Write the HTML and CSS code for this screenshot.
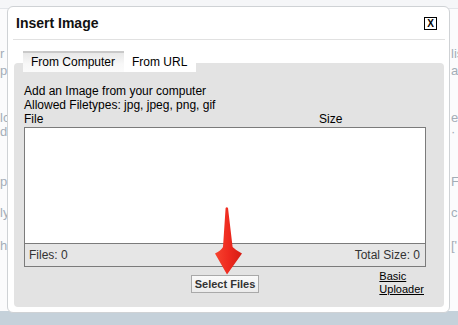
FILE: index.html
```html
<!DOCTYPE html>
<html lang="en">
<head>
    <meta charset="UTF-8">
    <title>Insert Image</title>
    <link rel="stylesheet" href="styles.css">
</head>
<body>
    <div class="page">
        <div class="page-text">
            <div class="bg-row"><span class="frag-l">r</span><span class="frag-r">lis</span></div>
            <div class="bg-row gap-a"><span class="frag-l">p</span><span class="frag-r">as</span></div>
            <div class="bg-row gap-b"><span class="frag-l">lc</span><span class="frag-r">e</span></div>
            <div class="bg-row"><span class="frag-l">d</span><span class="frag-r">·</span></div>
            <div class="bg-row gap-c"><span class="frag-l">p</span><span class="frag-r">Fi</span></div>
            <div class="bg-row gap-d"><span class="frag-l">ly</span><span class="frag-r">c</span></div>
            <div class="bg-row gap-e"><span class="frag-l">h</span><span class="frag-r">['</span></div>
        </div>
        <div class="page-bar"></div>
    </div>

    <div class="dialog">
        <div class="dialog-head">
            <span class="dialog-title">Insert Image</span>
            <span class="close">X</span>
        </div>
        <div class="panel">
            <div class="tabs">
                <span class="tab tab-active">From Computer</span>
                <span class="tab tab-plain">From URL</span>
            </div>
            <div class="panel-body">
                <p class="line">Add an Image from your computer</p>
                <p class="line">Allowed Filetypes: jpg, jpeg, png, gif</p>
                <div class="file-head">
                    <span>File</span>
                    <span>Size</span>
                </div>
                <div class="file-list">
                    <div class="file-rows"></div>
                    <div class="file-foot">
                        <span>Files: 0</span>
                        <span>Total Size: 0</span>
                    </div>
                </div>
                <div class="actions">
                    <span class="btn">Select Files</span>
                    <a class="uploader" href="#">Basic<br>Uploader</a>
                </div>
            </div>
        </div>
    </div>

    <svg class="arrow" viewBox="0 0 34 72">
        <defs>
            <linearGradient id="red" x1="0" y1="0" x2="1" y2="0">
                <stop offset="0" stop-color="#f7442f"/>
                <stop offset="0.5" stop-color="#ee2a1f"/>
                <stop offset="1" stop-color="#d41d14"/>
            </linearGradient>
        </defs>
        <path d="M13.6 3 Q14.8 1.4 16 3 L20.6 42 Q24 45.5 30 48.5 L15 69.5 L3 48.5 Q9 45.5 11 42 Z" fill="url(#red)"/>
    </svg>
</body>
</html>
```

FILE: styles.css
```css
body {
    margin: 0;
    width: 458px;
    height: 325px;
    overflow: hidden;
    position: relative;
    font-family: "Liberation Sans", Arial, sans-serif;
    background: #f5f6f8;
}

/* page behind the modal */
.page {
    display: flex;
    flex-direction: column;
    height: 325px;
}
.page-text {
    flex: 1;
    margin-top: 8px;
    padding-top: 38px;
    border-top: 1px solid #e2e5e9;
    background: #fbfbfc;
    font-size: 13px;
    color: #a3adb7;
}
.bg-row {
    display: flex;
    justify-content: space-between;
    height: 14px;
    line-height: 14px;
}
.gap-a { margin-top: 3px; }
.gap-b { margin-top: 33px; }
.gap-c { margin-top: 36px; }
.gap-d { margin-top: 17px; }
.gap-e { margin-top: 19px; }
.frag-l {
    width: 20px;
}
.frag-r {
    width: 7px;
    overflow: hidden;
    white-space: nowrap;
}
.page-bar {
    height: 14px;
    background: #c5d1da;
}

/* modal */
.dialog {
    position: absolute;
    left: 7px;
    top: 6px;
    width: 443px;
    box-sizing: border-box;
    background: #fff;
    border: 1px solid #cfd2d5;
    border-radius: 6px;
}
.dialog-head {
    display: flex;
    align-items: center;
    justify-content: space-between;
    height: 32px;
    margin: 0 4px 0 5px;
    padding: 0 8px 0 3px;
    border-bottom: 1px solid #e1e1e1;
}
.dialog-title {
    font-size: 14px;
    font-weight: bold;
    color: #111;
}
.close {
    width: 13px;
    height: 13px;
    box-sizing: border-box;
    border: 1px solid #000;
    font-size: 10px;
    font-weight: bold;
    line-height: 11px;
    text-align: center;
}
.panel {
    display: flow-root;
    margin: 23px 5px 5px 6px;
    background: #e3e3e3;
    border-radius: 4px;
}
.tabs {
    display: flex;
    align-items: flex-end;
    height: 21px;
    margin-top: -12px;
    padding-left: 9px;
    font-size: 12px;
}
.tab {
    padding: 0 9px 0 8px;
    color: #000;
}
.tab-active {
    height: 19px;
    line-height: 19px;
    border-top: 2px solid #c9c9c9;
    background: linear-gradient(#e8e8e8, #f8f8f8 60%, #fbfbfb);
}
.tab-plain {
    height: 15px;
    line-height: 15px;
    padding-bottom: 2px;
    background: #fff;
}
.panel-body {
    padding: 12px 18px 11px 10px;
    font-size: 12px;
    line-height: 14px;
    color: #000;
}
.line {
    margin: 0;
}
.file-head {
    display: grid;
    grid-template-columns: 295px 1fr;
    margin-bottom: 1px;
}
.file-list {
    border: 1px solid #7b7b7b;
    background: #fff;
}
.file-rows {
    height: 115px;
}
.file-foot {
    display: flex;
    align-items: center;
    justify-content: space-between;
    height: 22px;
    padding: 0 5px 0 4px;
    border-top: 1px solid #7b7b7b;
    background: #e6e6e6;
    color: #333;
}
.actions {
    display: grid;
    grid-template-columns: 1fr auto 1fr;
    align-items: start;
    margin-top: 8px;
}
.btn {
    grid-column: 2;
    height: 18px;
    box-sizing: border-box;
    padding: 0 3px;
    border: 1px solid #a9a9a9;
    background: linear-gradient(#fafafa, #ebebeb);
    font-size: 11px;
    font-weight: bold;
    line-height: 16px;
    color: #333;
}
.uploader {
    justify-self: end;
    margin: -5px 2px 0 0;
    font-size: 11px;
    line-height: 13px;
    color: #000;
    text-decoration: underline;
}

.arrow {
    position: absolute;
    left: 212px;
    top: 205px;
    width: 34px;
    height: 72px;
}
```
